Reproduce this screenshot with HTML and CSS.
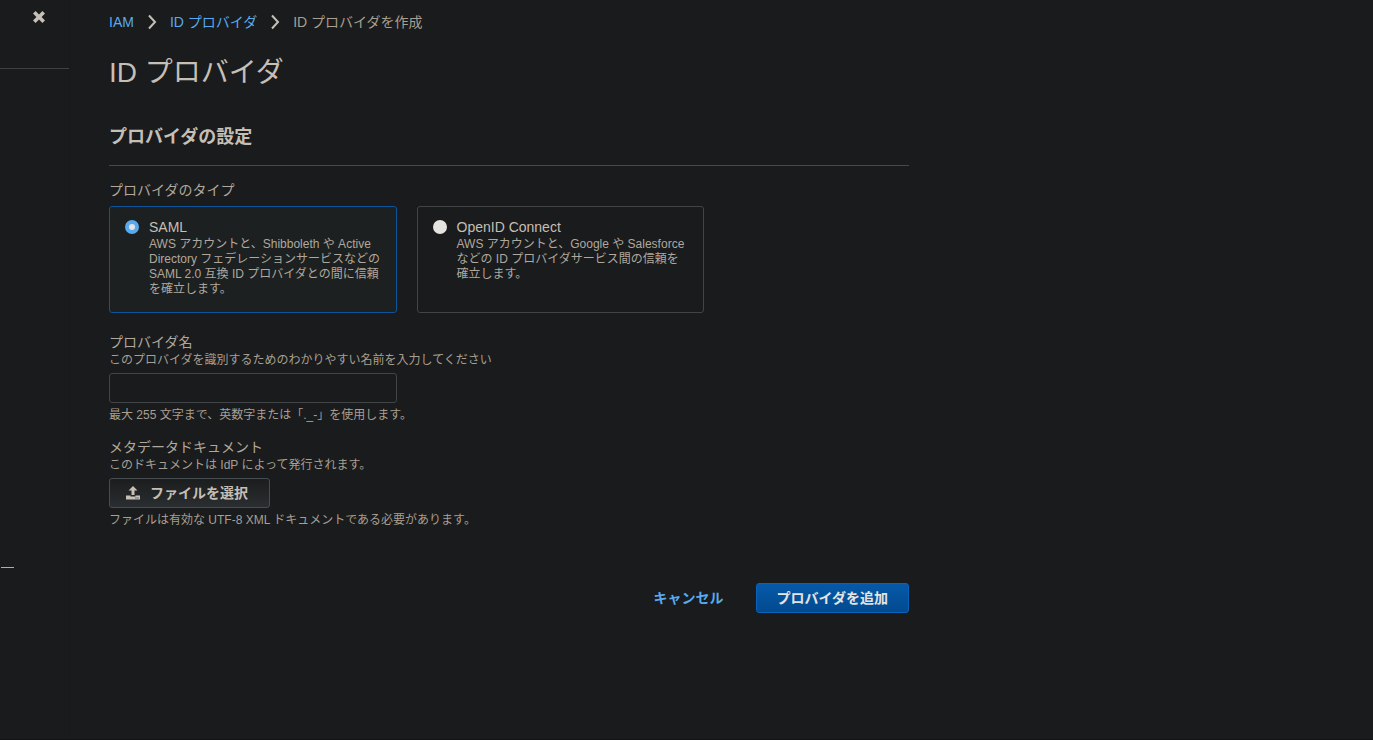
FILE: index.html
```html
<!DOCTYPE html>
<html lang="ja">
<head>
<meta charset="utf-8">
<title>ID プロバイダを作成</title>
<link rel="stylesheet" href="styles.css">
</head>
<body>
<div class="app">
  <aside class="sidebar">
    <div class="sidebar-head">
      <button class="close" type="button" aria-label="閉じる">
        <svg width="14" height="14" viewBox="0 0 14 14"><path d="M3.6 1 7 4.4 10.400 1 13 3.600 9.600 7 13 10.400 10.400 13 7 9.600 3.600 13 1 10.400 4.400 7 1 3.600z"/></svg>
      </button>
    </div>
    <div class="sidebar-body"><span class="sidebar-mark"></span></div>
  </aside>
  <main class="main">
    <nav class="breadcrumb" aria-label="パンくずリスト">
      <a href="#">IAM</a>
      <svg width="10" height="16" viewBox="0 0 10 16"><path d="M2 1.500 8 8 2 14.500"/></svg>
      <a href="#">ID プロバイダ</a>
      <svg width="10" height="16" viewBox="0 0 10 16"><path d="M2 1.500 8 8 2 14.500"/></svg>
      <span>ID プロバイダを作成</span>
    </nav>
    <h1 class="title">ID プロバイダ</h1>
    <form class="form">
      <h2 class="section-title">プロバイダの設定</h2>
      <fieldset class="types">
        <legend class="label">プロバイダのタイプ</legend>
        <div class="cards">
          <label class="card">
            <input class="radio" type="radio" name="type" checked>
            <span class="card-text">
              <span class="card-name">SAML</span>
              <span class="card-desc">AWS アカウントと、Shibboleth や Active Directory フェデレーションサービスなどの SAML 2.0 互換 ID プロバイダとの間に信頼を確立します。</span>
            </span>
          </label>
          <label class="card">
            <input class="radio" type="radio" name="type">
            <span class="card-text">
              <span class="card-name">OpenID Connect</span>
              <span class="card-desc">AWS アカウントと、Google や Salesforce などの ID プロバイダサービス間の信頼を確立します。</span>
            </span>
          </label>
        </div>
      </fieldset>
      <div class="field">
        <label class="label" for="name">プロバイダ名</label>
        <p class="hint">このプロバイダを識別するためのわかりやすい名前を入力してください</p>
        <input class="text" id="name" type="text">
        <p class="hint">最大 255 文字まで、英数字または「._-」を使用します。</p>
      </div>
      <div class="field">
        <label class="label" for="file">メタデータドキュメント</label>
        <p class="hint">このドキュメントは IdP によって発行されます。</p>
        <button class="button file" id="file" type="button">
          <svg width="14" height="14" viewBox="0 0 14 14"><path d="M7 0 11.500 4.500H8.500V9H5.500V4.500H2.500z"/><path fill-rule="evenodd" d="M0 9.500H4.500V10.500H9.500V9.500H14V13.500H0zM9.500 11.500V12.500H10.500V11.500zM11.500 11.500V12.500H12.500V11.500z"/></svg>
          ファイルを選択
        </button>
        <p class="hint">ファイルは有効な UTF-8 XML ドキュメントである必要があります。</p>
      </div>
      <div class="actions">
        <button class="button cancel" type="button">キャンセル</button>
        <button class="button primary" type="button">プロバイダを追加</button>
      </div>
    </form>
  </main>
</div>
</body>
</html>
```
FILE: styles.css
```css
* { box-sizing: border-box; }

body {
  margin: 0;
  background: #191b1c;
  color: #a89f92;
  font: 14px/18px "Liberation Sans", "Noto Sans CJK JP", sans-serif;
}

.app { display: flex; min-height: 100vh; border-bottom: 1px solid #141216; }

.sidebar {
  flex: 0 0 70px;
  display: flex;
  flex-direction: column;
  border-right: 1px solid #17191a;
}
.sidebar-head {
  height: 69px;
  padding: 10px 23px;
  border-bottom: 1px solid #3c4144;
  text-align: right;
}
.close { display: block; margin-left: auto; padding: 0; border: 0; background: none; }
.close svg { display: block; fill: #c6bfb6; }
.sidebar-body { padding: 498px 1px 0; }
.sidebar-mark { display: block; width: 13px; height: 1px; background: #b5ad9f; }

.main { flex: 1; padding: 13px 39px; }

.breadcrumb { display: flex; align-items: center; gap: 13px; }
.breadcrumb a { color: #58aaf0; text-decoration: none; }
.breadcrumb svg { fill: none; stroke: #c6bfb6; stroke-width: 2; }

.title { margin: 24px 0 0; color: #c6bfb6; font-size: 28px; line-height: 36px; font-weight: 400; }

.form { max-width: 800px; }
.section-title {
  margin: 33px 0 16px;
  padding: 0 0 15px;
  border-bottom: 1px solid #45494b;
  color: #c6bfb6;
  font-size: 18px;
  line-height: 26px;
  font-weight: 700;
}

.types { margin: 0; padding: 0; border: 0; }
.label { display: block; padding: 0; color: #b0a89c; }
.types .label { line-height: 16px; }
.cards { display: grid; grid-template-columns: 1fr 1fr; gap: 20px; max-width: 595px; margin-top: 8px; }
.card {
  display: flex;
  align-items: flex-start;
  gap: 10px;
  padding: 12px 14px 15px 15px;
  border: 1px solid #414547;
  border-radius: 3px;
}
.card:has(:checked) { border-color: #0c549b; background: #1c2021; }
.radio {
  flex: none;
  appearance: none;
  width: 14px;
  height: 14px;
  margin: 1px 0 0;
  border-radius: 50%;
  background: #e6e4e0;
}
.radio:checked { border: 4px solid #58aaf0; }
.card-text { flex: 1; display: block; }
.card-name { display: block; margin-bottom: 2px; color: #c6bfb6; line-height: 16px; }
.card-desc { display: block; color: #b0a89c; font-size: 12px; line-height: 15px; }

.field { margin-top: 20px; }
.field + .field { margin-top: 15px; }
.hint { margin: 0; font-size: 12px; line-height: 16px; }
.label + .hint { padding-top: 1px; }
.text {
  display: block;
  width: 100%;
  max-width: 288px;
  height: 30px;
  margin: 5px 0 4px;
  padding: 0 10px;
  border: 1px solid #414547;
  border-radius: 3px;
  background: #191b1c;
  color: #c6bfb6;
  font: inherit;
}

.button {
  display: flex;
  align-items: center;
  height: 30px;
  border: 1px solid transparent;
  border-radius: 3px;
  font: inherit;
  font-weight: 700;
}
.file {
  gap: 10px;
  margin: 5px 0 4px;
  padding: 0 21px 0 16px;
  border-color: #474c4f;
  background: linear-gradient(#1b1d1e, #2a2e30);
  color: #c6bfb6;
}
.file svg { fill: #c6bfb6; }
.actions { display: flex; justify-content: flex-end; gap: 10px; margin-top: 55px; }
.cancel { padding: 0 21px; background: none; color: #58aaf0; }
.primary {
  padding: 0 20px;
  border-color: #0763bd;
  background: linear-gradient(#0659a9, #024a8f);
  color: #e6e4e0;
}
```
